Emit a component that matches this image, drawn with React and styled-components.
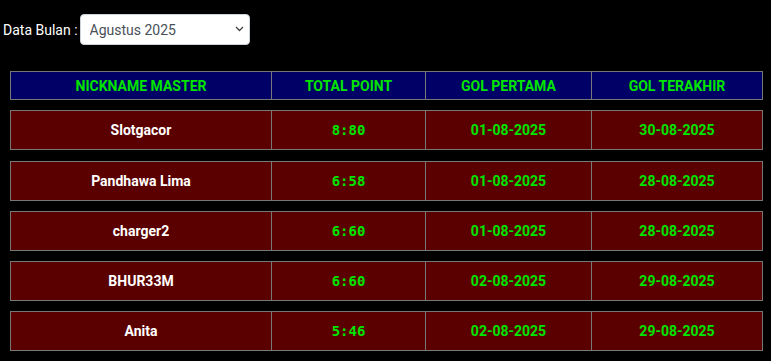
import React from "react";
import styled, { createGlobalStyle } from "styled-components";

const Global = createGlobalStyle`
  html, body { margin: 0; padding: 0; background: #000; }
  body { font-family: Roboto, "Liberation Sans", Arial, sans-serif; }
  * { box-sizing: border-box; }
`;

const Page = styled.div`
  padding: 14px 0 0 3px;
  background: #000;
  min-height: 361px;
`;

const FilterBar = styled.div`
  display: flex;
  align-items: center;
  height: 31px;
`;

const Label = styled.label`
  color: #fff;
  font-size: 14px;
  margin-right: 2px;
`;

const SelectWrap = styled.div`
  position: relative;
  width: 170px;
  height: 31px;
`;

const Select = styled.select`
  appearance: none;
  -webkit-appearance: none;
  width: 100%;
  height: 100%;
  border: 1px solid #ced4da;
  border-radius: 4px;
  background: #fff;
  color: #495057;
  font-family: Roboto, "Liberation Sans", Arial, sans-serif;
  font-size: 14px;
  padding: 0 24px 0 9px;
  outline: none;
`;

const Chevron = styled.svg`
  position: absolute;
  right: 6px;
  top: 12px;
  width: 9px;
  height: 6px;
  pointer-events: none;
`;

const Table = styled.div`
  margin: 26px 0 0 7px;
  width: 753px;
  display: flex;
  flex-direction: column;
  gap: 10.25px;
`;

const Row = styled.div`
  display: grid;
  grid-template-columns: 260px 154px 166px 171px;
  border: 1px solid #777;
  background: ${(p) => (p.$head ? "#000066" : "#5a0000")};
  height: ${(p) => (p.$head ? "29px" : "40px")};
`;

const Cell = styled.div`
  display: flex;
  align-items: center;
  justify-content: center;
  font-weight: 700;
  font-size: 14px;
  color: ${(p) => (p.$white ? "#fff" : "#00e400")};
  font-family: ${(p) =>
    p.$mono
      ? '"DejaVu Sans Mono", "Liberation Mono", monospace'
      : 'Roboto, "Liberation Sans", Arial, sans-serif'};
  & + & {
    border-left: 1px solid #777;
  }
`;

const data = [
  ["Slotgacor", "8:80", "01-08-2025", "30-08-2025"],
  ["Pandhawa Lima", "6:58", "01-08-2025", "28-08-2025"],
  ["charger2", "6:60", "01-08-2025", "28-08-2025"],
  ["BHUR33M", "6:60", "02-08-2025", "29-08-2025"],
  ["Anita", "5:46", "02-08-2025", "29-08-2025"],
];

export default function App() {
  return (
    <>
      <Global />
      <Page>
        <FilterBar>
          <Label>Data Bulan :</Label>
          <SelectWrap>
            <Select defaultValue="2025-08">
              <option value="2025-08">Agustus 2025</option>
              <option value="2025-07">Juli 2025</option>
            </Select>
            <Chevron viewBox="0 0 9 6">
              <path d="M1 1l3.5 3.5L8 1" fill="none" stroke="#444" strokeWidth="1.3" />
            </Chevron>
          </SelectWrap>
        </FilterBar>
        <Table>
          <Row $head>
            <Cell>NICKNAME MASTER</Cell>
            <Cell>TOTAL POINT</Cell>
            <Cell>GOL PERTAMA</Cell>
            <Cell>GOL TERAKHIR</Cell>
          </Row>
          {data.map((r) => (
            <Row key={r[0]}>
              <Cell $white>{r[0]}</Cell>
              <Cell $mono>{r[1]}</Cell>
              <Cell>{r[2]}</Cell>
              <Cell>{r[3]}</Cell>
            </Row>
          ))}
        </Table>
      </Page>
    </>
  );
}
